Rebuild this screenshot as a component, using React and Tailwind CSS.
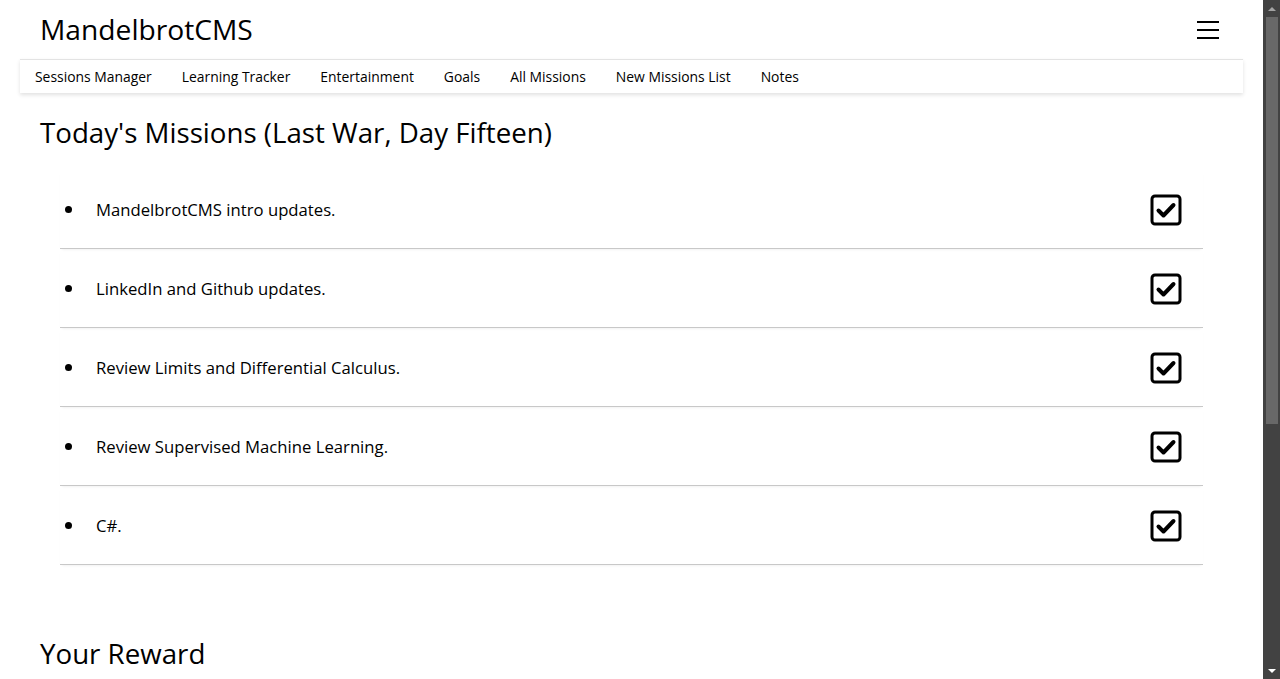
import React from 'react'

const navLinks = ['Sessions Manager', 'Learning Tracker', 'Entertainment', 'Goals', 'All Missions', 'New Missions List', 'Notes']

const missions = [
    'MandelbrotCMS intro updates.',
    'LinkedIn and Github updates.',
    'Review Limits and Differential Calculus.',
    'Review Supervised Machine Learning.',
    'C#.',
]

const CheckIcon = () => (
    <svg width="32" height="32" viewBox="0 0 32 32" fill="none">
        <rect x="2" y="2" width="28" height="28" rx="3" stroke="#000" strokeWidth="3" />
        <path d="M8.5 16.5 L13.5 21.5 L23.5 11" stroke="#000" strokeWidth="4" strokeLinecap="round" strokeLinejoin="round" />
    </svg>
)

const Scrollbar = () => (
    <div className="w-[17px] h-[679px] bg-[#424242] flex flex-col items-center shrink-0">
        <div className="h-[17px] flex items-center justify-center">
            <div className="w-0 h-0 border-l-[4px] border-r-[4px] border-b-[4px] border-l-transparent border-r-transparent border-b-[#a3a3a3]" />
        </div>
        <div className="w-[12px] h-[407px] bg-[#686868]" />
        <div className="flex-1" />
        <div className="h-[17px] flex items-center justify-center">
            <div className="w-0 h-0 border-l-[4px] border-r-[4px] border-t-[4px] border-l-transparent border-r-transparent border-t-[#ffffff]" />
        </div>
    </div>
)

export default function App() {
    return (
        <div className="flex w-[1280px] h-[679px] overflow-hidden bg-white text-black" style={{ fontFamily: '"Open Sans", "Noto Sans", sans-serif' }}>
            <div className="w-[1263px] h-[679px] overflow-hidden">
                {/* header */}
                <div className="mx-[20px]">
                    <div className="h-[59px] flex items-center justify-between px-[20px]">
                        <h1 className="text-[28.2px] leading-none">MandelbrotCMS</h1>
                        <div className="flex flex-col gap-[6px] mr-[4px]">
                            <span className="block w-[22px] h-[2px] bg-black" />
                            <span className="block w-[22px] h-[2px] bg-black" />
                            <span className="block w-[22px] h-[2px] bg-black" />
                        </div>
                    </div>
                    <nav className="h-[34px] pt-[2px] border-t border-[#e3e3e3] shadow-[0_2px_4px_rgba(0,0,0,0.12)] flex items-center pl-[15px] gap-[30px] text-[13.9px]">
                        {navLinks.map((link) => (
                            <span key={link}>{link}</span>
                        ))}
                    </nav>
                </div>

                {/* missions */}
                <div className="px-[40px]">
                    <h2 className="text-[27.7px] leading-none mt-[26px]">Today's Missions (Last War, Day Fifteen)</h2>
                    <ul className="ml-[20px] mr-[20px] mt-[23px]">
                        {missions.map((m) => (
                            <li key={m} className="h-[79px] pt-[2px] flex items-center justify-between border-b border-[#c8c8c8] shadow-[0_2px_3px_-2px_rgba(0,0,0,0.1)]">
                                <div className="flex items-center">
                                    <span className="w-[7px] h-[7px] rounded-full bg-black ml-[5px] mr-[24px]" />
                                    <span className="text-[16.7px]">{m}</span>
                                </div>
                                <div className="mr-[21px]">
                                    <CheckIcon />
                                </div>
                            </li>
                        ))}
                    </ul>
                    <h2 className="text-[27.7px] leading-none mt-[75px]">Your Reward</h2>
                </div>
            </div>
            <Scrollbar />
        </div>
    )
}
